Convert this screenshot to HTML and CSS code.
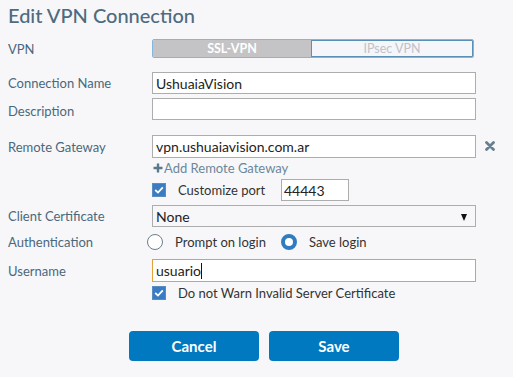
FILE: index.html
```html
<!DOCTYPE html>
<html lang="en">
<head>
    <meta charset="UTF-8">
    <title>Edit VPN Connection</title>
    <link rel="stylesheet" href="styles.css">
</head>
<body>
    <h1 class="title">Edit VPN Connection</h1>
    <div class="form">
        <div class="row row-vpn">
            <label class="lbl">VPN</label>
            <div class="toggle">
                <div class="tog on">SSL-VPN</div>
                <div class="tog off">IPsec VPN</div>
            </div>
        </div>
        <div class="row row-name">
            <label class="lbl">Connection Name</label>
            <div class="input">UshuaiaVision</div>
        </div>
        <div class="row row-desc">
            <label class="lbl">Description</label>
            <div class="input"></div>
        </div>
        <div class="row row-gw">
            <label class="lbl">Remote Gateway</label>
            <div class="input">vpn.ushuaiavision.com.ar</div>
            <svg class="xicon" width="10" height="10" viewBox="0 0 10 10">
                <path d="M1.5 1.5 L8.5 8.5 M8.5 1.5 L1.5 8.5" stroke="#667f90" stroke-width="2.8" stroke-linecap="round"/>
            </svg>
        </div>
        <div class="row row-add">
            <svg class="plus" width="10" height="10" viewBox="0 0 10 10">
                <path d="M5 0.5 V9.5 M0.5 5 H9.5" stroke="#5a778b" stroke-width="2.4"/>
            </svg>
            <span class="add">Add Remote Gateway</span>
        </div>
        <div class="row row-port">
            <span class="check"><svg width="10" height="8" viewBox="0 0 10 8"><path d="M1.2 4 L4 6.6 L8.8 1.4" stroke="#fff" stroke-width="1.8" fill="none"/></svg></span>
            <span class="ctext">Customize port</span>
            <div class="input port">44443</div>
        </div>
        <div class="row row-cert">
            <label class="lbl">Client Certificate</label>
            <div class="input select">None<span class="arrow"></span></div>
        </div>
        <div class="row row-auth">
            <label class="lbl">Authentication</label>
            <span class="radio"></span>
            <span class="rtext">Prompt on login</span>
            <span class="radio sel"></span>
            <span class="rtext">Save login</span>
        </div>
        <div class="row row-user">
            <label class="lbl">Username</label>
            <div class="input focus">usuario<span class="caret"></span></div>
        </div>
        <div class="row row-warn">
            <span class="check"><svg width="10" height="8" viewBox="0 0 10 8"><path d="M1.2 4 L4 6.6 L8.8 1.4" stroke="#fff" stroke-width="1.8" fill="none"/></svg></span>
            <span class="ctext dark">Do not Warn Invalid Server Certificate</span>
        </div>
    </div>
    <div class="buttons">
        <button class="btn">Cancel</button>
        <button class="btn">Save</button>
    </div>
</body>
</html>
```

FILE: styles.css
```css
* {
    margin: 0;
    padding: 0;
    box-sizing: border-box;
}
body {
    width: 513px;
    height: 377px;
    background: #f7f7f9;
    font-family: Lato, "Open Sans", sans-serif;
    overflow: hidden;
}
.title {
    font-size: 20px;
    font-weight: 500;
    color: #4e6b7f;
    padding: 3px 0 0 8px;
    height: 39px;
    line-height: 24px;
}
.form {
    display: flex;
    flex-direction: column;
}
.row {
    display: flex;
    align-items: center;
    padding-left: 8px;
}
.lbl {
    width: 144px;
    flex: none;
    font-size: 13px;
    color: #4a687c;
}
.row-vpn { height: 19px; }
.row-name { margin-top: 14px; height: 22px; }
.row-desc { margin-top: 4px; height: 22px; }
.row-desc .lbl { padding-top: 4px; }
.row-gw { margin-top: 15px; height: 23px; }
.row-add { margin-top: 1px; height: 18px; padding-left: 153px; }
.row-port { margin-top: 2px; height: 22px; padding-left: 152px; }
.row-cert { margin-top: 4px; height: 22px; }
.row-auth { margin-top: 7px; height: 16px; }
.row-user { margin-top: 9px; height: 23px; }
.row-warn { margin-top: 3px; height: 16px; padding-left: 152px; }

.toggle {
    display: flex;
    width: 322px;
    height: 19px;
    border: 1px solid #86b6d6;
    border-radius: 2px;
    overflow: hidden;
}
.tog {
    font-size: 12.5px;
    text-align: center;
    line-height: 17px;
}
.tog.on {
    width: 158px;
    background: #c4c4c6;
    color: #fff;
    font-weight: bold;
}
.tog.off {
    flex: 1;
    background: #f5f6fa;
    color: #bfc3c8;
    border: 1px solid #5b8fb6;
    line-height: 15px;
}
.input {
    width: 324px;
    height: 100%;
    border: 1px solid #adadad;
    background: #fff;
    font-size: 14px;
    color: #222;
    padding-left: 3px;
    display: flex;
    align-items: center;
}
.input.port {
    width: 68px;
    padding-left: 2px;
}
.input.select {
    position: relative;
    background: #f7f7f9;
}
.arrow {
    position: absolute;
    right: 8px;
    top: 8px;
    border-left: 3.5px solid transparent;
    border-right: 3.5px solid transparent;
    border-top: 7px solid #111;
}
.input.focus {
    border-color: #e0a43a;
}
.caret {
    display: inline-block;
    width: 1px;
    height: 16px;
    background: #111;
}
.xicon {
    margin-left: 9px;
    margin-top: -1px;
}
.plus {
    margin-right: 1px;
}
.add {
    font-size: 13px;
    color: #6b879a;
}
.check {
    width: 14px;
    height: 14px;
    background: #3a7cc3;
    border: 1px solid #5a8cbf;
    display: flex;
    align-items: center;
    justify-content: center;
    flex: none;
}
.ctext {
    font-size: 13px;
    color: #333;
    margin-left: 12px;
    width: 103px;
}
.ctext.dark {
    width: auto;
}
.radio {
    width: 16px;
    height: 16px;
    border-radius: 50%;
    border: 1px solid #6c7e8b;
    background: #fff;
    margin-left: -5px;
    flex: none;
}
.radio.sel {
    border: 4px solid #2f7cc0;
    margin-left: 0;
}
.rtext {
    font-size: 13px;
    color: #333;
    margin-left: 12px;
    width: 106px;
}
.rtext:last-child {
    width: auto;
}
.buttons {
    display: flex;
    gap: 10px;
    padding-left: 129px;
    margin-top: 30px;
}
.btn {
    width: 130px;
    height: 30px;
    background: #0079c1;
    border: none;
    border-radius: 4px;
    color: #fff;
    font-family: Lato, "Open Sans", sans-serif;
    font-size: 15px;
    font-weight: bold;
}
```
